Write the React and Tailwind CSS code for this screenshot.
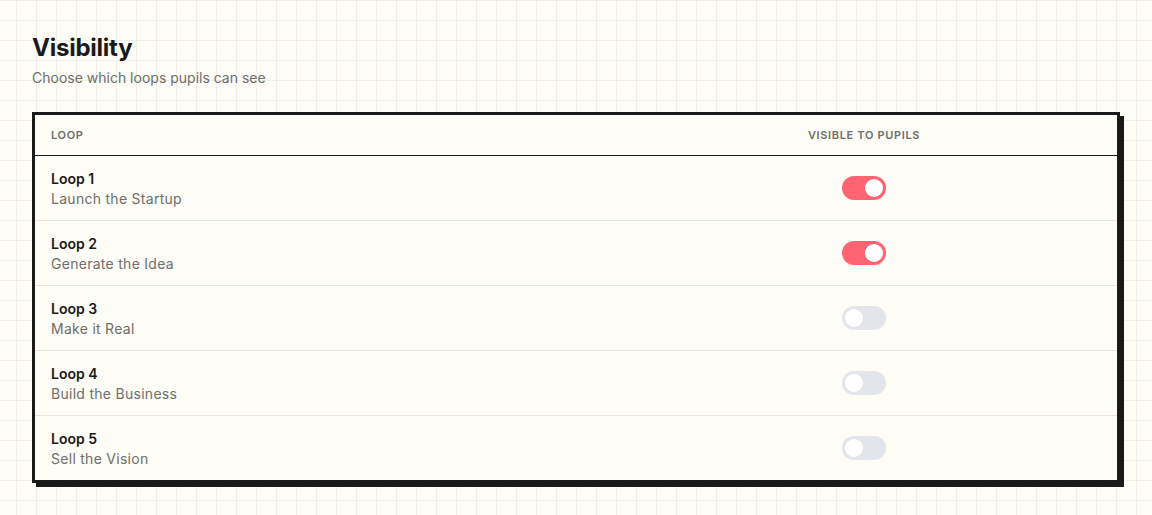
import React, { useState } from "react";

const loops = [
  { name: "Loop 1", title: "Launch the Startup", on: true },
  { name: "Loop 2", title: "Generate the Idea", on: true },
  { name: "Loop 3", title: "Make it Real", on: false },
  { name: "Loop 4", title: "Build the Business", on: false },
  { name: "Loop 5", title: "Sell the Vision", on: false },
];

function Toggle({ on, onChange }) {
  return (
    <button
      type="button"
      onClick={onChange}
      className={
        "relative w-[44px] h-[24px] rounded-full transition-colors " +
        (on ? "bg-[#ff6470]" : "bg-[#e4e5ea]")
      }
    >
      <span
        className={
          "absolute top-[3px] h-[18px] w-[18px] rounded-full bg-white transition-all " +
          (on ? "left-[23px]" : "left-[3px]")
        }
      />
    </button>
  );
}

export default function App() {
  const [state, setState] = useState(loops.map((l) => l.on));
  return (
    <div
      className="min-h-[515px] w-full bg-[#fdfcf7] bg-[linear-gradient(to_right,#efeee7_1px,transparent_1px),linear-gradient(to_bottom,#efeee7_1px,transparent_1px)] [background-size:20px_20px] [background-position:16px_0px] px-8 pt-8 pb-8 text-[#1a1a1a]"
      style={{ fontFamily: "Inter, 'Noto Sans', sans-serif" }}
    >
      <h1 className="text-[24px] leading-[32px] font-bold tracking-[-0.01em]">Visibility</h1>
      <p className="mt-1 text-[14px] leading-[20px] text-[#6e6e6a]">Choose which loops pupils can see</p>
      <div className="mt-6 border-[3px] border-[#1a1a1a] bg-[#fdfcf7] shadow-[4px_4px_0_#1a1a1a]">
        <div className="grid grid-cols-[1fr_506px] h-[41px] items-center border-b border-[#1a1a1a]">
          <div className="pl-4 text-[11px] font-semibold tracking-[0.06em] text-[#6e6e6a] uppercase">Loop</div>
          <div className="text-center text-[11px] font-semibold tracking-[0.06em] text-[#6e6e6a] uppercase">Visible to pupils</div>
        </div>
        {loops.map((l, i) => (
          <div
            key={l.name}
            className={
              "grid grid-cols-[1fr_506px] items-center " +
              (i < loops.length - 1 ? "h-[65px] border-b border-[#e7e5dd]" : "h-[64px]")
            }
          >
            <div className="pl-4">
              <div className="text-[14px] leading-[19px] font-semibold">{l.name}</div>
              <div className="mt-px text-[14px] leading-[19px] tracking-[0.02em] text-[#6e6e6a]">{l.title}</div>
            </div>
            <div className="flex justify-center">
              <Toggle
                on={state[i]}
                onChange={() => setState((s) => s.map((v, j) => (j === i ? !v : v)))}
              />
            </div>
          </div>
        ))}
      </div>
    </div>
  );
}
